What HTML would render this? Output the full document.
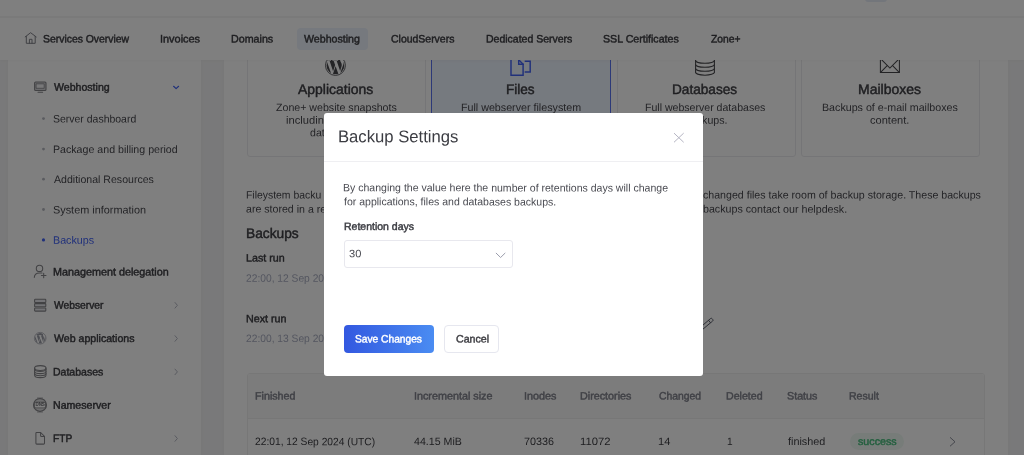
<!DOCTYPE html>
<html><head><meta charset="utf-8">
<style>
*{box-sizing:border-box;margin:0;padding:0}
html,body{width:1024px;height:455px;overflow:hidden}
body{font-family:"Liberation Sans",sans-serif;background:#f3f3f4;color:#23272b;position:relative;font-size:11px}
.abs{position:absolute}
.t{position:absolute;white-space:nowrap;line-height:1;display:inline-block;transform-origin:0 0}
.m{-webkit-text-stroke:0.45px currentColor}
.b{font-weight:bold}
svg{position:absolute;overflow:visible}
#page{left:0;top:0;width:1024px;height:455px;overflow:hidden;filter:blur(.3px)}
#mtext{left:0;top:0;width:1024px;height:455px;filter:blur(.25px)}
#top{left:0;top:0;width:1024px;height:17px;background:#fff}
#topline{left:0;top:16px;width:1024px;height:2px;background:#f4f4f4}
#toppill{left:865px;top:-6px;width:22px;height:8px;background:#e6ecf7;border-radius:3px}
#nav{left:0;top:17px;width:1024px;height:43px;background:#fff;box-shadow:0 1px 3px rgba(0,0,0,.03)}
#navpill{left:297px;top:28px;width:71px;height:22px;background:#ecf3fd;border-radius:4px}
#side{left:8px;top:60px;width:193px;height:395px;background:#fff;box-shadow:0 0 5px rgba(0,0,0,.035)}
#main{left:223.5px;top:60px;width:784.3px;height:395px;background:#fff;box-shadow:0 0 5px rgba(0,0,0,.035)}
.card{position:absolute;top:20px;height:136.6px;width:179px;border:1px solid #ebebee;border-radius:3px;background:#fff}
.card.sel{background:#edf4fe;border:1.1px solid #5873f0}
.bul{position:absolute;width:2.6px;height:2.6px;border-radius:50%;background:#b9bcc6;left:42.2px}
#tbl{left:246.5px;top:372.5px;width:738px;height:100px;border:1px solid #efefef;border-radius:3px;background:#fff;overflow:hidden}
#thead{left:0;top:0;width:738px;height:45.5px;background:#f9f9f9;border-bottom:1px solid #efefef}
#badge{left:849.6px;top:433px;width:54.7px;height:17.2px;border-radius:9px;background:#eef9f2}
#overlay{left:0;top:0;width:1024px;height:455px;background:rgba(0,0,0,.5)}
#modal{left:324.4px;top:112.5px;width:378.3px;height:263px;background:#fff;border-radius:3px}
#mline{left:324.4px;top:161px;width:378.3px;height:1px;background:#efeff2}
#sel{left:344.2px;top:239.8px;width:169.3px;height:28.2px;border:1px solid #e8e8ee;border-radius:3px;background:#fff}
#save{left:344px;top:324.8px;width:89.7px;height:28.6px;border-radius:4px;background:linear-gradient(90deg,#3358e0,#4a8cf2)}
#cancel{left:444.2px;top:324.8px;width:55px;height:28.6px;border-radius:4px;border:1px solid #e6e7ef;background:#fff}
</style></head><body>
<div id="page" class="abs">
<div id="side" class="abs"></div>
<div id="main" class="abs"></div>
<div class="card" style="left:246.5px;top:20px"></div>
<div class="card sel" style="left:431.2px;top:20px;width:179.6px"></div>
<div class="card" style="left:616.5px;top:20px"></div>
<div class="card" style="left:801px;top:20px"></div>
<div id="tbl" class="abs"><div id="thead" class="abs"></div></div>
<div id="badge" class="abs"></div>
<!-- card icons -->
<svg style="left:325.3px;top:54.6px" width="20.9" height="20.9" viewBox="0 0 24 24"><circle cx="12" cy="12" r="10.2" fill="#49494d"/><path fill="#fff" d="M21.469 6.825c.84 1.537 1.318 3.3 1.318 5.175 0 3.979-2.156 7.456-5.363 9.325l3.295-9.527c.615-1.54.82-2.771.82-3.864 0-.405-.026-.78-.07-1.11m-7.981.105c.647-.03 1.232-.105 1.232-.105.582-.075.514-.93-.067-.899 0 0-1.755.135-2.88.135-1.064 0-2.85-.15-2.85-.15-.585-.03-.661.855-.075.885 0 0 .54.061 1.125.09l1.68 4.605-2.37 7.08L5.354 6.9c.649-.03 1.234-.1 1.234-.1.585-.075.516-.93-.065-.896 0 0-1.746.138-2.874.138-.2 0-.438-.008-.69-.015C4.911 3.15 8.235 1.215 12 1.215c2.809 0 5.365 1.072 7.286 2.833-.046-.003-.091-.009-.141-.009-1.06 0-1.812.923-1.812 1.914 0 .89.513 1.643 1.06 2.531.411.72.89 1.643.89 2.977 0 .915-.354 1.994-.821 3.479l-1.075 3.585-3.9-11.61.001.014zM12 22.784c-1.059 0-2.081-.153-3.048-.437l3.237-9.406 3.315 9.087c.024.053.05.101.078.149-1.12.393-2.325.609-3.582.609M1.211 12c0-1.564.336-3.05.935-4.39L7.29 21.709C3.694 19.96 1.212 16.271 1.211 12M12 0C5.385 0 0 5.385 0 12s5.385 12 12 12 12-5.385 12-12S18.615 0 12 0"/><circle cx="12" cy="12" r="11.45" fill="none" stroke="#49494d" stroke-width="1"/></svg>
<svg style="left:0;top:0" width="1024" height="455" fill="none" stroke-linecap="round" stroke-linejoin="round">
 <!-- files icon -->
 <g stroke="#4262f5" stroke-width="1.45" stroke-linecap="square" stroke-linejoin="miter">
  <path d="M511 56V75.2H523.1V64.3L518.7 59.8"/><path d="M518.7 59.8V64.3H523.1"/>
  <path d="M525.4 61.2H530.2V71.9H525.4"/>
 </g>
 <!-- db icon big -->
 <g stroke="#47474b" stroke-width="1.05">
  <path d="M695.6 57V72.3M714.4 57V72.3"/>
  <path d="M695.6 60.4A9.4 2.9 0 0 0 714.4 60.4"/>
  <path d="M695.6 64.4A9.4 2.9 0 0 0 714.4 64.4"/>
  <path d="M695.6 68.4A9.4 2.9 0 0 0 714.4 68.4"/>
  <path d="M695.6 72.3A9.4 2.9 0 0 0 714.4 72.3"/>
 </g>
 <!-- mail icon -->
 <g stroke="#47474b" stroke-width="1.05" stroke-linejoin="miter">
  <path d="M880.4 56V72.5H899.4V56"/>
  <path d="M881 59.2L889.9 68L898.8 59.2"/>
  <path d="M880.6 72.3L887.2 65.6M899.2 72.3L892.6 65.6"/>
 </g>
 <!-- pencil -->
 <g stroke="#5a5e6b" stroke-width="1">
  <path d="M699.3 330.8L700.4 327.3L710.6 318.5Q711.4 317.9 712.1 318.7L712.8 319.6Q713.4 320.4 712.6 321.1L702.4 329.6Z"/>
  <path d="M708.5 320.3L710.5 322.7"/>
 </g>
 <!-- table row chevron -->
 <path d="M950.3 437.6L955 441.8L950.3 446" stroke="#8a8d99" stroke-width="1"/>
 <!-- sidebar icons -->
 <g stroke="#858589" stroke-width="1.05">
  <rect x="34.6" y="81.9" width="11.4" height="8.6" rx="1" fill="#d4d4d8"/><rect x="36.4" y="83.8" width="7.8" height="4.5" fill="#f0f0f2" stroke-width=".8"/><path d="M38 92.3H42.6"/>
  <circle cx="39.5" cy="268.4" r="3.2"/><path d="M34.3 277.4Q34.6 273.1 39.4 273H42"/><path d="M41.4 275.5H46M43.7 273.2V277.8"/>
  <rect x="34.6" y="299.3" width="11.2" height="3.2" rx=".6" fill="#e6e7ec"/><rect x="34.6" y="303.6" width="11.2" height="3.2" rx=".6" fill="#e6e7ec"/><rect x="34.6" y="307.9" width="11.2" height="3.2" rx=".6" fill="#e6e7ec"/>
  <ellipse cx="40.3" cy="368" rx="5.7" ry="2.4"/><path d="M34.6 368V375.2Q34.6 377.6 40.3 377.6T46 375.2V368"/><path d="M34.6 371.6Q35 373.6 40.3 373.6T46 371.6"/><path d="M34.6 369.4Q35 371.4 40.3 371.4T46 369.4"/><path d="M34.6 373.6Q35 375.7 40.3 375.7T46 373.6"/>
  <circle cx="40" cy="404.9" r="6.5"/><rect x="34.3" y="402" width="11.4" height="6" rx="1.5" fill="#fff"/><path d="M36 399.9H44M37.5 398H42.5M36 410.1H44M37.5 412H42.5" stroke-width=".7"/>
  <path d="M36.6 432.5H40.6L44.5 436.4V443.2Q44.5 444.1 43.6 444.1H36.8Q35.9 444.1 35.9 443.2V433.2Q35.9 432.5 36.6 432.5Z"/><path d="M40.6 432.5V435.4Q40.6 436.4 41.6 436.4H44.5"/>
 </g>
 <g stroke="none" fill="#b4b6bf"><circle cx="43.5" cy="118.6" r="1.4"/><circle cx="43.5" cy="149.1" r="1.4"/><circle cx="43.5" cy="179.2" r="1.4"/><circle cx="43.5" cy="209.5" r="1.4"/><circle cx="43.5" cy="239.9" r="1.6" fill="#4262f5"/></g>
 <!-- sidebar chevrons -->
 <path d="M173.6 86.3L176.1 88.6L178.6 86.3" stroke="#4262f5" stroke-width="1.2"/>
 <g stroke="#b4b7c2" stroke-width="1">
  <path d="M175 302.5L177.4 305.3L175 308.1"/><path d="M175 335.7L177.4 338.5L175 341.3"/><path d="M175 369.1L177.4 371.9L175 374.7"/><path d="M175 435.7L177.4 438.5L175 441.3"/>
 </g>
</svg>
<svg style="left:34.1px;top:331.9px" width="12.4" height="12.4" viewBox="0 0 24 24"><circle cx="12" cy="12" r="10.2" fill="#9a9ca6"/><path fill="#fff" d="M21.469 6.825c.84 1.537 1.318 3.3 1.318 5.175 0 3.979-2.156 7.456-5.363 9.325l3.295-9.527c.615-1.54.82-2.771.82-3.864 0-.405-.026-.78-.07-1.11m-7.981.105c.647-.03 1.232-.105 1.232-.105.582-.075.514-.93-.067-.899 0 0-1.755.135-2.88.135-1.064 0-2.85-.15-2.85-.15-.585-.03-.661.855-.075.885 0 0 .54.061 1.125.09l1.68 4.605-2.37 7.08L5.354 6.9c.649-.03 1.234-.1 1.234-.1.585-.075.516-.93-.065-.896 0 0-1.746.138-2.874.138-.2 0-.438-.008-.69-.015C4.911 3.15 8.235 1.215 12 1.215c2.809 0 5.365 1.072 7.286 2.833-.046-.003-.091-.009-.141-.009-1.06 0-1.812.923-1.812 1.914 0 .89.513 1.643 1.06 2.531.411.72.89 1.643.89 2.977 0 .915-.354 1.994-.821 3.479l-1.075 3.585-3.9-11.61.001.014zM12 22.784c-1.059 0-2.081-.153-3.048-.437l3.237-9.406 3.315 9.087c.024.053.05.101.078.149-1.12.393-2.325.609-3.582.609M1.211 12c0-1.564.336-3.05.935-4.39L7.29 21.709C3.694 19.96 1.212 16.271 1.211 12M12 0C5.385 0 0 5.385 0 12s5.385 12 12 12 12-5.385 12-12S18.615 0 12 0"/><circle cx="12" cy="12" r="11.3" fill="none" stroke="#9a9ca6" stroke-width="1.3"/></svg>
<span class="t" style="left:35.5px;top:402.8px;font-size:4.5px;font-weight:bold;color:#6e6e74;letter-spacing:-.1px">DNS</span>
<span id="t8" class="t m" style="left:53.84px;font-size:10.8px;color:#3e3e43;transform:translateY(0.8px) scaleX(0.9797) rotate(.03deg);top:81px">Webhosting</span>
<span id="t9" class="t" style="left:53.12px;font-size:10.8px;color:#48484e;transform:translateY(0.5px) scaleX(0.9699) rotate(.03deg);top:113px">Server dashboard</span>
<span id="t10" class="t" style="left:52.86px;font-size:10.8px;color:#48484e;transform:translateY(0px) scaleX(0.9844) rotate(.03deg);top:144px">Package and billing period</span>
<span id="t11" class="t" style="left:53.6px;font-size:10.8px;color:#48484e;transform:translateY(0px) scaleX(0.9789) rotate(.03deg);top:174px">Additional Resources</span>
<span id="t12" class="t" style="left:53.1px;font-size:10.8px;color:#48484e;transform:translateY(0.4px) scaleX(1.0071) rotate(.03deg);top:204px">System information</span>
<span id="t13" class="t" style="left:52.85px;font-size:10.8px;color:#4262f5;transform:translateY(0.8px) scaleX(0.9938) rotate(.03deg);top:234px">Backups</span>
<span id="t14" class="t m" style="left:53.1px;font-size:10.8px;color:#3e3e43;transform:translateY(0.4px) scaleX(0.9983) rotate(.03deg);top:266px">Management delegation</span>
<span id="t15" class="t m" style="left:53.84px;font-size:10.8px;color:#3e3e43;transform:translateY(0.8px) scaleX(0.9505) rotate(.03deg);top:299px">Webserver</span>
<span id="t16" class="t m" style="left:53.85px;font-size:10.8px;color:#3e3e43;transform:translateY(0px) scaleX(0.9812) rotate(.03deg);top:333px">Web applications</span>
<span id="t17" class="t m" style="left:53.11px;font-size:10.8px;color:#3e3e43;transform:translateY(0.4px) scaleX(0.9745) rotate(.03deg);top:366px">Databases</span>
<span id="t18" class="t m" style="left:53.11px;font-size:10.8px;color:#3e3e43;transform:translateY(0.8px) scaleX(0.9812) rotate(.03deg);top:399px">Nameserver</span>
<span id="t19" class="t m" style="left:53.13px;font-size:10.8px;color:#3e3e43;transform:translateY(0px) scaleX(0.9468) rotate(.03deg);top:433px">FTP</span>
<span id="t20" class="t m" style="left:298.45px;font-size:14px;color:#3e3e43;transform:translateY(0px) scaleX(0.9974) rotate(.03deg);top:82px">Applications</span>
<span id="t21" class="t" style="left:275.65px;font-size:10.7px;color:#48484e;transform:translateY(0px) scaleX(0.9942) rotate(.03deg);top:102px">Zone+ website snapshots</span>
<span id="t22" class="t" style="left:285.82px;font-size:10.7px;color:#48484e;transform:translateY(0.7px) scaleX(1.0457) rotate(.03deg);top:114px">includin</span>
<span id="t23" class="t" style="left:310.15px;font-size:10.7px;color:#48484e;transform:translateY(0.3px) scaleX(0.9912) rotate(.03deg);top:127px">databases.</span>
<span id="t24" class="t m" style="left:506.17px;font-size:14px;color:#3e3e43;transform:translateY(0px) scaleX(0.9684) rotate(.03deg);top:82px">Files</span>
<span id="t25" class="t" style="left:460.65px;font-size:10.7px;color:#48484e;transform:translateY(0px) scaleX(1.0008) rotate(.03deg);top:102px">Full webserver filesystem</span>
<span id="t26" class="t m" style="left:672.47px;font-size:14px;color:#3e3e43;transform:translateY(0px) scaleX(0.9727) rotate(.03deg);top:82px">Databases</span>
<span id="t27" class="t" style="left:644.96px;font-size:10.7px;color:#48484e;transform:translateY(0px) scaleX(0.9880) rotate(.03deg);top:102px">Full webserver databases</span>
<span id="t28" class="t" style="left:684.7px;font-size:10.7px;color:#48484e;transform:translateY(0.7px) scaleX(0.9928) rotate(.03deg);top:114px">backups.</span>
<span id="t29" class="t m" style="left:858.15px;font-size:14px;color:#3e3e43;transform:translateY(0px) scaleX(1.0000) rotate(.03deg);top:82px">Mailboxes</span>
<span id="t30" class="t" style="left:821.85px;font-size:10.7px;color:#48484e;transform:translateY(0px) scaleX(0.9985) rotate(.03deg);top:102px">Backups of e-mail mailboxes</span>
<span id="t31" class="t" style="left:870.28px;font-size:10.7px;color:#48484e;transform:translateY(0.7px) scaleX(1.0340) rotate(.03deg);top:114px">content.</span>
<span id="t32" class="t" style="left:246.17px;font-size:10.7px;color:#48484e;transform:translateY(0.4px) scaleX(0.9743) rotate(.03deg);top:189px">Fileystem backu</span>
<span id="t33" class="t" style="left:703.2px;font-size:10.7px;color:#48484e;transform:translateY(0.4px) scaleX(0.9937) rotate(.03deg);top:189px">changed files take room of backup storage. These backups</span>
<span id="t34" class="t" style="left:246.4px;font-size:10.7px;color:#48484e;transform:translateY(0.6px) scaleX(0.9928) rotate(.03deg);top:203px">are stored in a remote</span>
<span id="t35" class="t" style="left:702.6px;font-size:10.7px;color:#48484e;transform:translateY(0.6px) scaleX(0.9986) rotate(.03deg);top:203px">backups contact our helpdesk.</span>
<span id="t36" class="t m" style="left:246.16px;font-size:14px;color:#3e3e43;transform:translateY(0.1px) scaleX(0.9820) rotate(.03deg);top:226px">Backups</span>
<span id="t37" class="t m" style="left:246.3px;font-size:10.7px;color:#3e3e43;transform:translateY(0.6px) scaleX(1.0013) rotate(.03deg);top:252px">Last run</span>
<span id="t38" class="t" style="left:246.32px;font-size:10.7px;color:#a9adc0;transform:translateY(0.7px) scaleX(0.9586) rotate(.03deg);top:272px">22:00, 12 Sep 2024 (UTC)</span>
<span id="t39" class="t m" style="left:246.3px;font-size:10.7px;color:#3e3e43;transform:translateY(0.3px) scaleX(1.0025) rotate(.03deg);top:313px">Next run</span>
<span id="t40" class="t" style="left:246.32px;font-size:10.7px;color:#a9adc0;transform:translateY(0.9px) scaleX(0.9586) rotate(.03deg);top:332px">22:00, 13 Sep 2024 (UTC)</span>
<span id="t41" class="t m" style="left:254.9px;font-size:10.7px;color:#80828c;transform:translateY(0.4px) scaleX(1.0025) rotate(.03deg);top:390px">Finished</span>
<span id="t42" class="t m" style="left:413.84px;font-size:10.7px;color:#80828c;transform:translateY(0.4px) scaleX(1.0078) rotate(.03deg);top:390px">Incremental size</span>
<span id="t43" class="t m" style="left:523.64px;font-size:10.7px;color:#80828c;transform:translateY(0.4px) scaleX(1.0112) rotate(.03deg);top:390px">Inodes</span>
<span id="t44" class="t m" style="left:579.9px;font-size:10.7px;color:#80828c;transform:translateY(0.4px) scaleX(1.0059) rotate(.03deg);top:390px">Directories</span>
<span id="t45" class="t m" style="left:658.76px;font-size:10.7px;color:#80828c;transform:translateY(0.4px) scaleX(0.9708) rotate(.03deg);top:390px">Changed</span>
<span id="t46" class="t m" style="left:726.2px;font-size:10.7px;color:#80828c;transform:translateY(0.4px) scaleX(0.9944) rotate(.03deg);top:390px">Deleted</span>
<span id="t47" class="t m" style="left:787.35px;font-size:10.7px;color:#80828c;transform:translateY(0.4px) scaleX(1.0033) rotate(.03deg);top:390px">Status</span>
<span id="t48" class="t m" style="left:849.11px;font-size:10.7px;color:#80828c;transform:translateY(0.4px) scaleX(0.9867) rotate(.03deg);top:390px">Result</span>
<span id="t49" class="t" style="left:254.92px;font-size:10.7px;color:#3e3e43;transform:translateY(0.1px) scaleX(0.9586) rotate(.03deg);top:436px">22:01, 12 Sep 2024 (UTC)</span>
<span id="t50" class="t" style="left:414.35px;font-size:10.7px;color:#3e3e43;transform:translateY(0.1px) scaleX(0.9958) rotate(.03deg);top:436px">44.15 MiB</span>
<span id="t51" class="t" style="left:523.9px;font-size:10.7px;color:#3e3e43;transform:translateY(0.1px) scaleX(1.0087) rotate(.03deg);top:436px">70336</span>
<span id="t52" class="t" style="left:579.61px;font-size:10.7px;color:#3e3e43;transform:translateY(0.1px) scaleX(1.0523) rotate(.03deg);top:436px">11072</span>
<span id="t53" class="t" style="left:658.22px;font-size:10.7px;color:#3e3e43;transform:translateY(0.1px) scaleX(1.0364) rotate(.03deg);top:436px">14</span>
<span id="t54" class="t" style="left:726.69px;font-size:10.7px;color:#3e3e43;transform:translateY(0.1px) scaleX(0.9500) rotate(.03deg);top:436px">1</span>
<span id="t55" class="t" style="left:787.6px;font-size:10.7px;color:#3e3e43;transform:translateY(0.1px) scaleX(1.0124) rotate(.03deg);top:436px">finished</span>
<span id="t56" class="t m" style="left:857.7px;font-size:10.7px;color:#47be7d;transform:translateY(0.1px) scaleX(1.0000) rotate(.03deg);top:436px">success</span>
<div id="top" class="abs"><div id="toppill" class="abs"></div></div>
<div id="nav" class="abs"></div>
<div id="topline" class="abs"></div>
<div id="navpill" class="abs"></div>
<svg style="left:0;top:0" width="1024" height="60" fill="none" stroke="#808189" stroke-width="1" stroke-linecap="round" stroke-linejoin="round">
 <path d="M25.2 36.9L30.6 32.7L36.2 36.9"/><path d="M26.3 36.4V43.3H35.2V36.4"/><path d="M29.4 43.3V39.3H32V43.3"/>
</svg>
<span id="t0" class="t m" style="left:42.66px;font-size:10.8px;color:#3e3e43;transform:translateY(0.5px) scaleX(0.9631) rotate(.03deg);top:33px">Services Overview</span>
<span id="t1" class="t m" style="left:159.64px;font-size:10.8px;color:#3e3e43;transform:translateY(0.5px) scaleX(1.0116) rotate(.03deg);top:33px">Invoices</span>
<span id="t2" class="t m" style="left:230.7px;font-size:10.8px;color:#3e3e43;transform:translateY(0.5px) scaleX(0.9905) rotate(.03deg);top:33px">Domains</span>
<span id="t3" class="t m" style="left:304.45px;font-size:10.8px;color:#3e3e43;transform:translateY(0.5px) scaleX(0.9833) rotate(.03deg);top:33px">Webhosting</span>
<span id="t4" class="t m" style="left:391.16px;font-size:10.8px;color:#3e3e43;transform:translateY(0.5px) scaleX(0.9692) rotate(.03deg);top:33px">CloudServers</span>
<span id="t5" class="t m" style="left:486.01px;font-size:10.8px;color:#3e3e43;transform:translateY(0.5px) scaleX(0.9722) rotate(.03deg);top:33px">Dedicated Servers</span>
<span id="t6" class="t m" style="left:603.25px;font-size:10.8px;color:#3e3e43;transform:translateY(0.5px) scaleX(0.9837) rotate(.03deg);top:33px">SSL Certificates</span>
<span id="t7" class="t m" style="left:711.1px;font-size:10.8px;color:#3e3e43;transform:translateY(0.5px) scaleX(0.9561) rotate(.03deg);top:33px">Zone+</span>
</div>
<div id="overlay" class="abs"></div>
<div id="modal" class="abs"></div>
<div id="mline" class="abs"></div>
<div id="sel" class="abs"></div>
<div id="save" class="abs"></div>
<div id="cancel" class="abs"></div>
<svg style="left:0;top:0" width="1024" height="455" fill="none" stroke-linecap="round" stroke-linejoin="round">
 <path d="M674.3 133.4L683.4 142M683.4 133.4L674.3 142" stroke="#b5b5c3" stroke-width="1"/>
 <path d="M496.2 253.2L500.6 257.5L505 253.2" stroke="#9a9cab" stroke-width="1"/>
</svg>
<div id="mtext" class="abs">
<span id="t57" class="t" style="left:337.57px;font-size:17px;color:#3b3c42;transform:translateY(0.3px) scaleX(0.9802) rotate(.03deg);top:128px">Backup Settings</span>
<span id="t58" class="t" style="left:343.46px;font-size:10.7px;color:#4a4b52;transform:translateY(0.3px) scaleX(0.9856) rotate(.03deg);top:182px">By changing the value here the number of retentions days will change</span>
<span id="t59" class="t" style="left:344.2px;font-size:10.7px;color:#4a4b52;transform:translateY(0.3px) scaleX(0.9839) rotate(.03deg);top:196px">for applications, files and databases backups.</span>
<span id="t60" class="t m" style="left:343.71px;font-size:10.7px;color:#3b3c42;transform:translateY(0px) scaleX(0.9823) rotate(.03deg);top:221px">Retention days</span>
<span id="t61" class="t" style="left:349.18px;font-size:10.7px;color:#4a4b52;transform:translateY(0.2px) scaleX(1.0364) rotate(.03deg);top:248px">30</span>
<span id="t62" class="t m" style="left:355.16px;font-size:10.7px;color:#ffffff;transform:translateY(0.4px) scaleX(0.9548) rotate(.03deg);top:333px">Save Changes</span>
<span id="t63" class="t m" style="left:455.65px;font-size:10.7px;color:#3e3e43;transform:translateY(0.4px) scaleX(0.9938) rotate(.03deg);top:333px">Cancel</span>
</div>
</body></html>
